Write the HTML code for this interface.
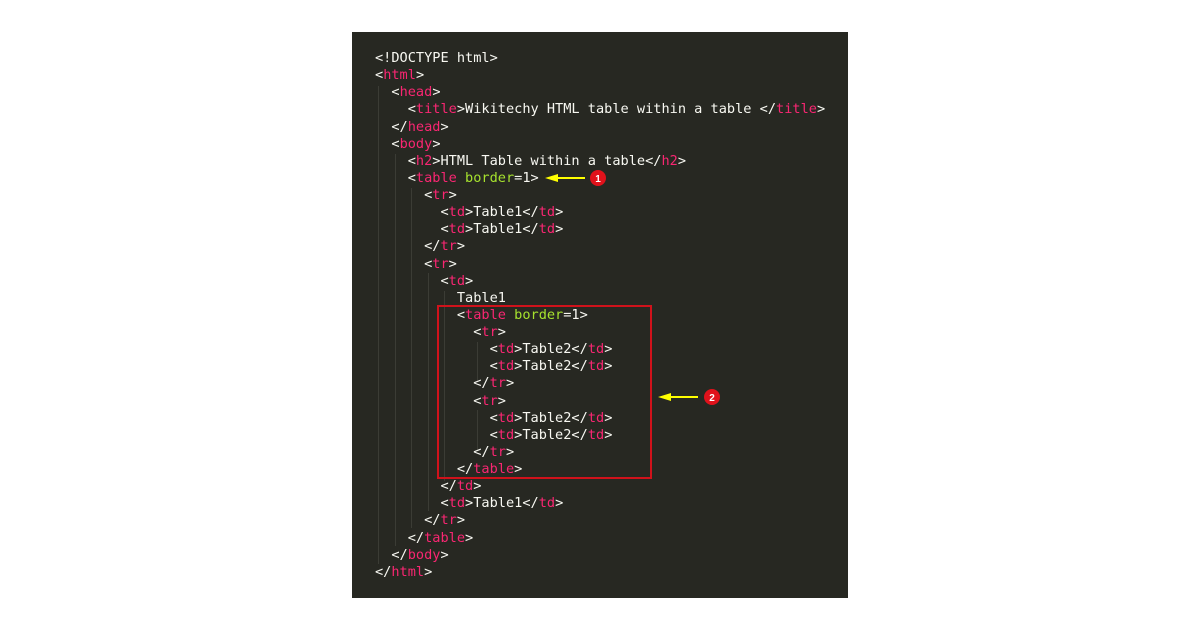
<!DOCTYPE html>
<html><head><style>
body{margin:0;width:1200px;height:630px;background:#fff;position:relative;overflow:hidden}
#p{position:absolute;left:352px;top:32px;width:496px;height:566px;background:#272822}
pre{position:absolute;left:375px;top:50px;margin:0;font:13.6px/17.13px "DejaVu Sans Mono",monospace;color:#f8f8f2}
.t{color:#f92672}.a{color:#a6e22e}
.g{position:absolute;width:1px;background:#3b3c35}
</style></head><body>
<div id="p"></div>
<div class="g" style="left:378px;top:86px;height:478px"></div>
<div class="g" style="left:395px;top:154px;height:392px"></div>
<div class="g" style="left:411px;top:188px;height:340px"></div>
<div class="g" style="left:428px;top:273px;height:238px"></div>
<div class="g" style="left:444px;top:291px;height:190px"></div>
<div class="g" style="left:477px;top:342px;height:40px"></div>
<div class="g" style="left:477px;top:410px;height:40px"></div>
<pre>&lt;!DOCTYPE html&gt;
&lt;<span class="t">html</span>&gt;
  &lt;<span class="t">head</span>&gt;
    &lt;<span class="t">title</span>&gt;Wikitechy HTML table within a table &lt;/<span class="t">title</span>&gt;
  &lt;/<span class="t">head</span>&gt;
  &lt;<span class="t">body</span>&gt;
    &lt;<span class="t">h2</span>&gt;HTML Table within a table&lt;/<span class="t">h2</span>&gt;
    &lt;<span class="t">table</span> <span class="a">border</span>=1&gt;
      &lt;<span class="t">tr</span>&gt;
        &lt;<span class="t">td</span>&gt;Table1&lt;/<span class="t">td</span>&gt;
        &lt;<span class="t">td</span>&gt;Table1&lt;/<span class="t">td</span>&gt;
      &lt;/<span class="t">tr</span>&gt;
      &lt;<span class="t">tr</span>&gt;
        &lt;<span class="t">td</span>&gt;
          Table1
          &lt;<span class="t">table</span> <span class="a">border</span>=1&gt;
            &lt;<span class="t">tr</span>&gt;
              &lt;<span class="t">td</span>&gt;Table2&lt;/<span class="t">td</span>&gt;
              &lt;<span class="t">td</span>&gt;Table2&lt;/<span class="t">td</span>&gt;
            &lt;/<span class="t">tr</span>&gt;
            &lt;<span class="t">tr</span>&gt;
              &lt;<span class="t">td</span>&gt;Table2&lt;/<span class="t">td</span>&gt;
              &lt;<span class="t">td</span>&gt;Table2&lt;/<span class="t">td</span>&gt;
            &lt;/<span class="t">tr</span>&gt;
          &lt;/<span class="t">table</span>&gt;
        &lt;/<span class="t">td</span>&gt;
        &lt;<span class="t">td</span>&gt;Table1&lt;/<span class="t">td</span>&gt;
      &lt;/<span class="t">tr</span>&gt;
    &lt;/<span class="t">table</span>&gt;
  &lt;/<span class="t">body</span>&gt;
&lt;/<span class="t">html</span>&gt;</pre>
<div style="position:absolute;left:437px;top:305px;width:211px;height:170px;border:2px solid #d0121b"></div>
<svg width="1200" height="630" style="position:absolute;left:0;top:0">
<line x1="556" y1="178" x2="585" y2="178" stroke="#ffff00" stroke-width="2"/>
<polygon points="545,178 558,174 558,182" fill="#ffff00"/>
<circle cx="598" cy="178" r="8" fill="#e0121b"/>
<text x="598" y="182" font-family="Liberation Sans" font-size="10" font-weight="bold" fill="#fff" text-anchor="middle">1</text>
<line x1="669" y1="397" x2="698" y2="397" stroke="#ffff00" stroke-width="2"/>
<polygon points="658,397 671,393 671,401" fill="#ffff00"/>
<circle cx="712" cy="397" r="8" fill="#e0121b"/>
<text x="712" y="401" font-family="Liberation Sans" font-size="10" font-weight="bold" fill="#fff" text-anchor="middle">2</text>
</svg>
</body></html>
